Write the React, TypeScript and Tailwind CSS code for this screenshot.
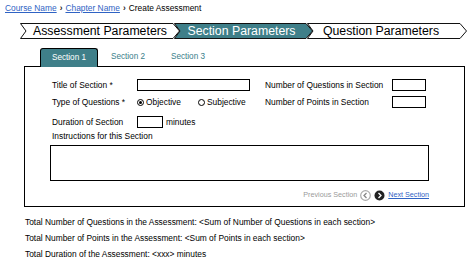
import { ReactNode } from 'react';

const TEAL = '#3f7f89';

function Step({ width, first, active, shift = 0, children }: { width: number; first?: boolean; active?: boolean; shift?: number; children: ReactNode }) {
    const w = width;
    const pts = `0.5,0.5 ${w - 7},0.5 ${w - 0.5},8 ${w - 7},15.5 0.5,15.5 6,8`;
    return (
        <div className={`relative h-[16px] flex items-center justify-center ${first ? '' : '-ml-[6px]'}`} style={{ width: w, paddingRight: shift }}>
            <svg className="absolute inset-0" width={w} height={16} viewBox={`0 0 ${w} 16`}>
                <polygon points={pts} fill={active ? TEAL : '#ffffff'} stroke="#111" strokeWidth="1" />
            </svg>
            <span className={`relative text-[12.3px] leading-[16px] ${active ? 'text-white' : 'text-black'}`}>{children}</span>
        </div>
    );
}

function Radio({ checked, label }: { checked?: boolean; label: string }) {
    return (
        <div className="flex items-center gap-[2px]">
            <span className="w-[7px] h-[7px] rounded-full border border-black flex items-center justify-center">
                {checked && <span className="w-[3px] h-[3px] rounded-full bg-black" />}
            </span>
            <span>{label}</span>
        </div>
    );
}

function Box({ w }: { w: string }) {
    return <div className={`${w} h-[12px] border border-black bg-white`} />;
}

export default function App() {
    return (
        <div className="w-[476px] h-[262px] bg-white overflow-hidden text-[#222] font-['Liberation_Sans',Arial,sans-serif]">
            {/* breadcrumb */}
            <div className="pt-[3px] pl-[5px] h-[13px] text-[8.4px] leading-[10px] flex items-center gap-[3px]">
                <span className="text-[#2f63c4] underline">Course Name</span>
                <span className="font-bold">›</span>
                <span className="text-[#2f63c4] underline">Chapter Name</span>
                <span className="font-bold">›</span>
                <span className="text-black">Create Assessment</span>
            </div>

            {/* steps */}
            <div className="mt-[10px] ml-[20px] flex">
                <Step width={160} first>Assessment Parameters</Step>
                <Step width={139} active shift={4}>Section Parameters</Step>
                <Step width={160} shift={12}>Question Parameters</Step>
            </div>

            {/* tabs */}
            <div className="mt-[9px] ml-[40px] flex items-end h-[18px] text-[8.2px]">
                <div className="relative z-10 -mb-px w-[58px] h-[19px] rounded-t-[3px] border border-b-0 border-black bg-[#3f7f89] text-white flex items-center justify-center">
                    Section 1
                </div>
                <div className="w-[60px] h-[18px] flex items-center justify-center text-[#3a7e8a]">Section 2</div>
                <div className="w-[60px] h-[18px] flex items-center justify-center text-[#3a7e8a]">Section 3</div>
            </div>

            {/* panel */}
            <div className="ml-[24px] w-[441px] h-[141px] border border-black pt-[12px] pl-[27px] pr-[35px] text-[8.4px] leading-[10px] text-black">
                <div className="flex items-center h-[12px]">
                    <span className="w-[85px]">Title of Section *</span>
                    <Box w="w-[113px]" />
                    <span className="ml-[15px] w-[127px]">Number of Questions in Section</span>
                    <Box w="w-[34px]" />
                </div>
                <div className="mt-[5px] flex items-center h-[12px]">
                    <span className="w-[85px]">Type of Questions *</span>
                    <div className="w-[128px] flex items-center">
                        <div className="w-[61px]"><Radio checked label="Objective" /></div>
                        <Radio label="Subjective" />
                    </div>
                    <span className="w-[127px]">Number of Points in Section</span>
                    <Box w="w-[34px]" />
                </div>
                <div className="mt-[8px] flex items-center h-[12px]">
                    <span className="w-[85px]">Duration of Section</span>
                    <Box w="w-[26px]" />
                    <span className="ml-[3px]">minutes</span>
                </div>
                <div className="mt-[3px] h-[10px]">Instructions for this Section</div>
                <div className="mt-[4px] -ml-[2px] w-[379px] h-[36px] border border-black" />
                <div className="mt-[9px] flex items-center justify-end gap-[3px] h-[10px] text-[7.2px]">
                    <span className="text-[#9a9a9a]">Previous Section</span>
                    <svg width="11" height="11" viewBox="0 0 11 11">
                        <circle cx="5.5" cy="5.5" r="4.8" fill="#fff" stroke="#aaa" strokeWidth="1.2" />
                        <path d="M6.5 3 L4 5.5 L6.5 8" fill="none" stroke="#888" strokeWidth="1.3" />
                    </svg>
                    <svg width="11" height="11" viewBox="0 0 11 11">
                        <circle cx="5.5" cy="5.5" r="5" fill="#222" />
                        <path d="M4.5 3 L7 5.5 L4.5 8" fill="none" stroke="#fff" strokeWidth="1.3" />
                    </svg>
                    <span className="text-[#2f63c4] underline">Next Section</span>
                </div>
            </div>

            {/* totals */}
            <div className="mt-[7px] ml-[25px] text-[8.4px] leading-[16px] text-black">
                <div>Total Number of Questions in the Assessment: &lt;Sum of Number of Questions in each section&gt;</div>
                <div>Total Number of Points in the Assessment: &lt;Sum of Points in each section&gt;</div>
                <div>Total Duration of the Assessment: &lt;xxx&gt; minutes</div>
            </div>
        </div>
    );
}
